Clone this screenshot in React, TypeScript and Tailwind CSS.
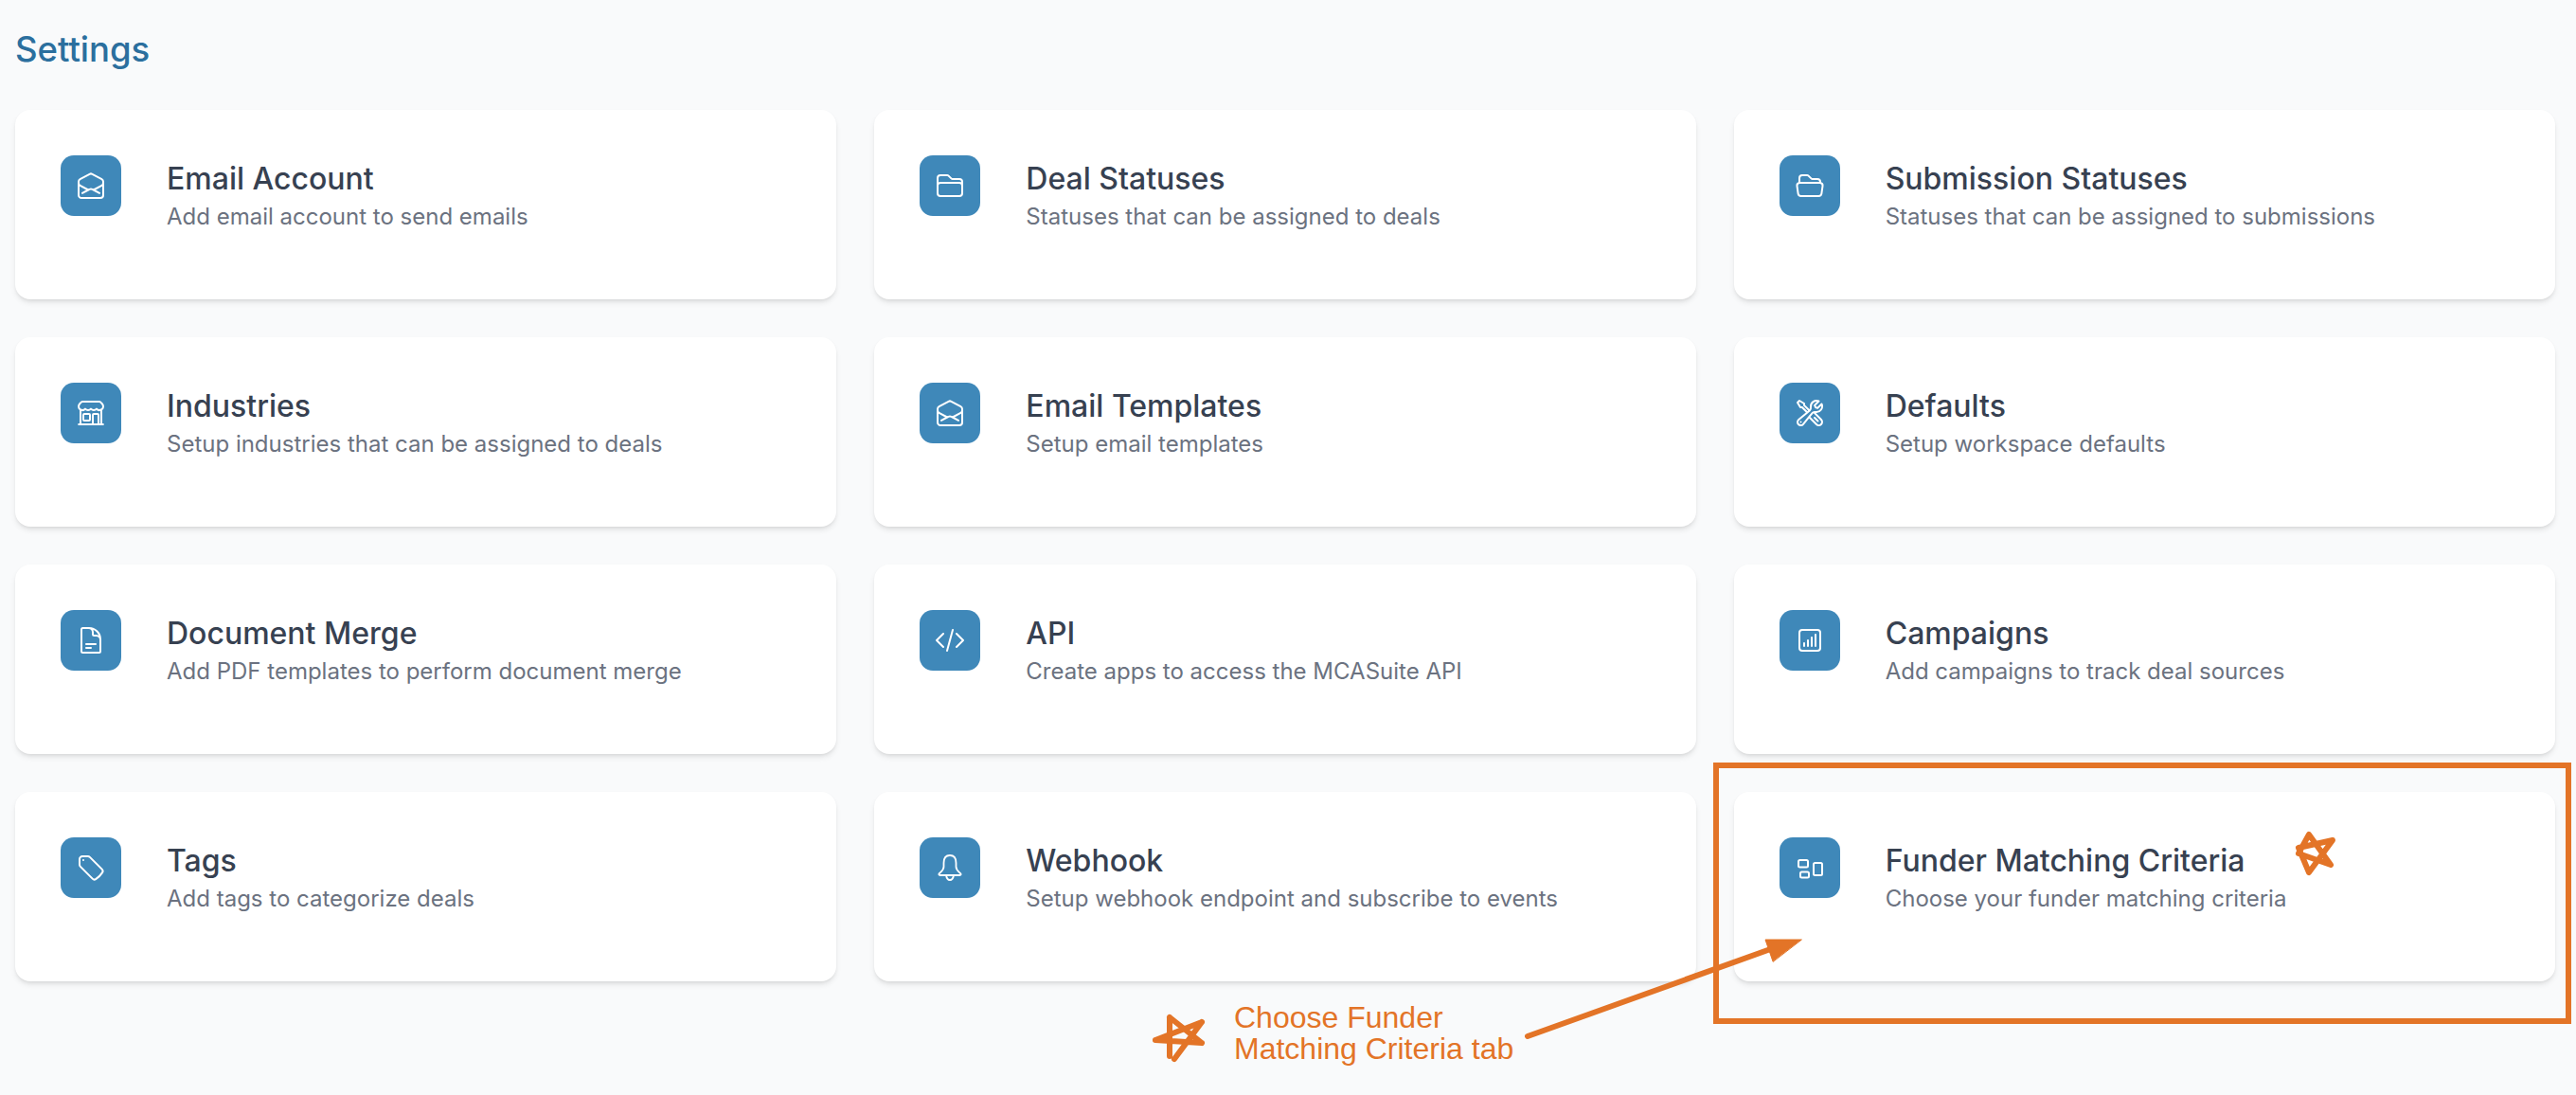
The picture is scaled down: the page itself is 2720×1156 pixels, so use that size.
import { ReactNode } from "react"
import {
    HiOutlineBuildingStorefront,
    HiOutlineChartBarSquare,
    HiOutlineCodeBracket,
    HiOutlineDocumentText,
    HiOutlineEnvelopeOpen,
    HiOutlineFolder,
    HiOutlineFolderOpen,
    HiOutlineTag,
    HiOutlineWrenchScrewdriver,
} from "react-icons/hi2"

const BellIcon = () => (
    <svg width="32" height="32" viewBox="0 0 32 32" fill="none" stroke="white" strokeWidth="1.8" strokeLinejoin="round">
        <path d="M16 3 C11.5 3 9.5 6.5 9.5 11 V15 C9.5 18.5 7 20 4.5 22.5 Q4 24 5.5 24 H26.5 Q28 24 27.5 22.5 C25 20 22.5 18.5 22.5 15 V11 C22.5 6.5 20.5 3 16 3 Z" />
        <path d="M12 24 C12.5 27 14 29 16 29 C18 29 19.5 27 20 24" />
    </svg>
)

const BlocksIcon = () => (
    <svg width="32" height="32" viewBox="0 0 32 32" fill="none" stroke="white" strokeWidth="2">
        <rect x="4" y="8" width="10" height="7.5" rx="1.5" />
        <rect x="6" y="20.5" width="9" height="6" rx="1.5" />
        <rect x="20" y="11" width="9" height="13" rx="1.5" />
    </svg>
)

const cards: { title: string; desc: string; icon: ReactNode }[] = [
    { title: "Email Account", desc: "Add email account to send emails", icon: <HiOutlineEnvelopeOpen size={32} /> },
    { title: "Deal Statuses", desc: "Statuses that can be assigned to deals", icon: <HiOutlineFolder size={32} /> },
    { title: "Submission Statuses", desc: "Statuses that can be assigned to submissions", icon: <HiOutlineFolderOpen size={32} /> },
    { title: "Industries", desc: "Setup industries that can be assigned to deals", icon: <HiOutlineBuildingStorefront size={32} /> },
    { title: "Email Templates", desc: "Setup email templates", icon: <HiOutlineEnvelopeOpen size={32} /> },
    { title: "Defaults", desc: "Setup workspace defaults", icon: <HiOutlineWrenchScrewdriver size={32} /> },
    { title: "Document Merge", desc: "Add PDF templates to perform document merge", icon: <HiOutlineDocumentText size={32} /> },
    { title: "API", desc: "Create apps to access the MCASuite API", icon: <HiOutlineCodeBracket size={32} /> },
    { title: "Campaigns", desc: "Add campaigns to track deal sources", icon: <HiOutlineChartBarSquare size={32} /> },
    { title: "Tags", desc: "Add tags to categorize deals", icon: <HiOutlineTag size={32} /> },
    { title: "Webhook", desc: "Setup webhook endpoint and subscribe to events", icon: <BellIcon /> },
    { title: "Funder Matching Criteria", desc: "Choose your funder matching criteria", icon: <BlocksIcon /> },
]

const App = () => {
    return (
        <div className="relative h-[1156px] w-[2720px] overflow-hidden bg-[#f9fafb] font-['Inter',sans-serif]">
            <div className="pl-4 pr-[22px] pt-[30px]">
                <h1 className="h-[86px] text-[36.5px] leading-[44px] font-medium text-[#2b6f9e]">Settings</h1>

                <div className="grid grid-cols-3 gap-10">
                    {cards.map(card => (
                        <div key={card.title} className="flex h-[200px] gap-12 rounded-2xl bg-white p-12 shadow-md">
                            <div className="flex h-16 w-16 shrink-0 items-center justify-center rounded-[14px] bg-[#3f88b9] text-white">
                                {card.icon}
                            </div>
                            <div className="pt-[5px]">
                                <h2 className="text-[32px] leading-10 font-medium text-[#374151]">{card.title}</h2>
                                <p className="mt-1 text-[24px] leading-8 text-[#6b7280]">{card.desc}</p>
                            </div>
                        </div>
                    ))}
                </div>
            </div>

            {/* annotation overlay */}
            <div className="absolute left-[1809px] top-[805px] h-[276px] w-[906px] border-[6px] border-[#e37427]" />
            <p className="absolute left-[1303px] top-[1058px] text-[32px] leading-[33px] text-[#e37427] font-['Liberation_Sans',sans-serif]">
                Choose Funder<br />Matching Criteria tab
            </p>
            <svg className="absolute left-0 top-0" width="2720" height="1156" fill="none" stroke="#e37427" strokeLinecap="round" strokeLinejoin="round">
                <path d="M1613 1094 L1875 1000" strokeWidth="6" />
                <path d="M1902 992 L1864 992 L1872 1015 Z" fill="#e37427" strokeWidth="1" />
                <path d="M1220 1098 L1269 1079 M1235 1074 L1269 1101 M1220 1098 L1269 1101 M1235 1074 L1235 1115 M1269 1079 L1240 1118" strokeWidth="6" />
                <path d="M2438 881 L2461 913 L2427 901 Z M2463 887 L2438 921 L2427 895 Z" strokeWidth="6" />
            </svg>
        </div>
    )
}

export default App
